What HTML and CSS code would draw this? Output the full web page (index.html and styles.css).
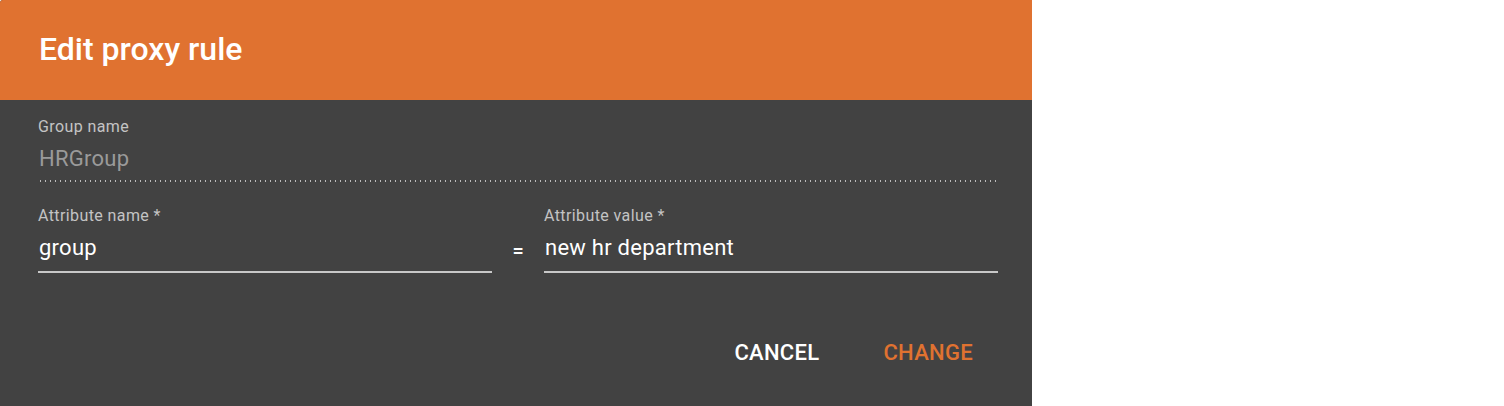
FILE: index.html
```html
<!DOCTYPE html>
<html>
<head>
<meta charset="utf-8">
<link rel="stylesheet" href="styles.css">
</head>
<body>
<div class="dialog">
  <div class="header"><h1 class="title">Edit proxy rule</h1></div>
  <div class="content">
    <div class="field field-full">
      <label class="label">Group name</label>
      <div class="value disabled">HRGroup</div>
      <div class="line dotted"></div>
    </div>
    <div class="row">
      <div class="field">
        <label class="label">Attribute name *</label>
        <div class="value">group</div>
        <div class="line"></div>
      </div>
      <div class="eq">=</div>
      <div class="field">
        <label class="label">Attribute value *</label>
        <div class="value">new hr department</div>
        <div class="line"></div>
      </div>
    </div>
    <div class="actions">
      <button class="btn">CANCEL</button>
      <button class="btn primary">CHANGE</button>
    </div>
  </div>
</div>
</body>
</html>
```
FILE: styles.css
```css
html, body { margin: 0; padding: 0; background: #ffffff; }
body { font-family: Roboto, "Noto Sans", sans-serif; }
.dialog {
  width: 1032px;
  height: 406px;
  background: #424242;
  border-top-left-radius: 3px;
  overflow: hidden;
  display: flex;
  flex-direction: column;
}
.header {
  height: 100px;
  background: #e07230;
  display: flex;
  align-items: center;
  padding-left: 39px;
  padding-bottom: 3px;
  box-sizing: border-box;
}
.title {
  margin: 0;
  color: #ffffff;
  font-size: 32px;
  font-weight: 500;
  line-height: 1;
}
.content {
  padding: 17px 34px 0 38px;
  display: flex;
  flex-direction: column;
}
.field { display: flex; flex-direction: column; flex: 1; }
.label {
  color: #c4c4c4;
  font-size: 16px;
  letter-spacing: 0.4px;
  line-height: 20px;
}
.value {
  color: #ffffff;
  font-size: 22px;
  letter-spacing: 0.25px;
  line-height: 26px;
  margin-top: 9px;
  padding-left: 1px;
}
.value.disabled { color: #9a9a9a; }
.line { height: 2px; background: #c8c8c8; margin-top: 10px; }
.line.dotted {
  height: 2px;
  background: none;
  background-image: radial-gradient(circle, #bdbdbd 0.9px, transparent 1.1px);
  background-size: 5px 2px;
  background-repeat: repeat-x;
  margin-top: 8px;
}
.row {
  display: flex;
  margin-top: 24px;
}
.eq {
  width: 52px;
  text-align: center;
  color: #ffffff;
  font-size: 20px;
  font-weight: 500;
  line-height: 20px;
  padding-top: 35px;
}
.actions {
  display: flex;
  justify-content: flex-end;
  margin-top: 67px;
  padding-right: 9px;
  gap: 32px;
}
.btn {
  background: none;
  border: none;
  color: #ffffff;
  font-family: Roboto, sans-serif;
  font-size: 22px;
  font-weight: 500;
  line-height: 26px;
  padding: 0 16px;
  letter-spacing: 0.3px;
}
.btn.primary { color: #e07230; }
```
